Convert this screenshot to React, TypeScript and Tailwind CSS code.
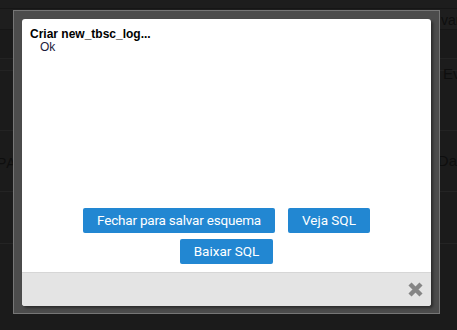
import React from 'react';

const buttonClass =
  'h-[25px] rounded-[2px] bg-[#2287d2] px-[14px] text-[13.5px] leading-[25px] text-white font-["Roboto",sans-serif]';

const CloseIcon: React.FC = () => (
  <svg width="17" height="17" viewBox="0 0 17 17" className="block">
    <path d="M3 3 L14 14 M14 3 L3 14" stroke="#858585" strokeWidth="4.4" strokeLinecap="butt" />
  </svg>
);

const App: React.FC = () => {
  return (
    <div className="relative h-[330px] w-[457px] overflow-hidden bg-[#1b1b1b] font-['Liberation_Sans',Arial,sans-serif]">
      {/* Background page (dimmed behind the modal) */}
      <div className="flex flex-col text-[#0e0e0e]">
        <div className="h-[9px] border-b border-[#161616] bg-[#1d1d1d]" />
        <div className="h-[21px] border-b border-[#161616] bg-[#1e1e1e]">
          <span className="ml-[441px] block pt-[3px] text-[14px] leading-[16px]">var</span>
        </div>
        <div className="h-[29px] border-b border-[#232323] bg-[#1a1a1a]" />
        <div className="h-[12px] border-b border-[#232323] bg-[#1c1c1c]" />
        <div className="h-[60px] border-b border-[#232323] bg-[#1b1b1b]">
          <span className="-mt-[6px] ml-[443px] block text-[15px] leading-[18px]">Ev</span>
        </div>
        <div className="flex h-[61px] items-start justify-between border-b border-[#242424] bg-[#1b1b1b] pt-[24px]">
          <span className="-ml-[3px] text-[14px] leading-[16px] tracking-[1px]">PA</span>
          <span className="-mt-[3px] text-[15px] leading-[18px]">Da</span>
        </div>
        <div className="h-[52px] border-b border-[#242424] bg-[#1b1b1b]" />
      </div>

      {/* Modal frame */}
      <div className="absolute left-[13px] top-[10px] h-[304px] w-[427px] border border-[#767676] bg-[#4c4c4c] p-[8px]">
        <div className="flex h-[287px] w-[409px] flex-col overflow-hidden rounded-[3px] bg-white shadow-[2px_2px_3px_rgba(0,0,0,0.45)]">
          <div className="flex flex-1 flex-col">
            <div className="px-[8px] pt-[9px]">
              <div className="text-[12px] font-bold leading-[13px] text-black">Criar new_tbsc_log...</div>
              <div className="pl-[10px] text-[12px] leading-[12px] text-[#1c1c3c]">Ok</div>
            </div>
            <div className="flex-1" />
            <div className="flex flex-col items-center gap-[6px] pb-[8px]">
              <div className="flex gap-[13px]">
                <button className={`${buttonClass} tracking-[-0.2px]`}>Fechar para salvar esquema</button>
                <button className={buttonClass}>Veja SQL</button>
              </div>
              <button className={buttonClass}>Baixar SQL</button>
            </div>
          </div>
          <div className="flex h-[34px] items-center justify-end border-t border-[#d6d6d6] bg-[#e4e4e4] pr-[7px]">
            <CloseIcon />
          </div>
        </div>
      </div>
    </div>
  );
};

export default App;
